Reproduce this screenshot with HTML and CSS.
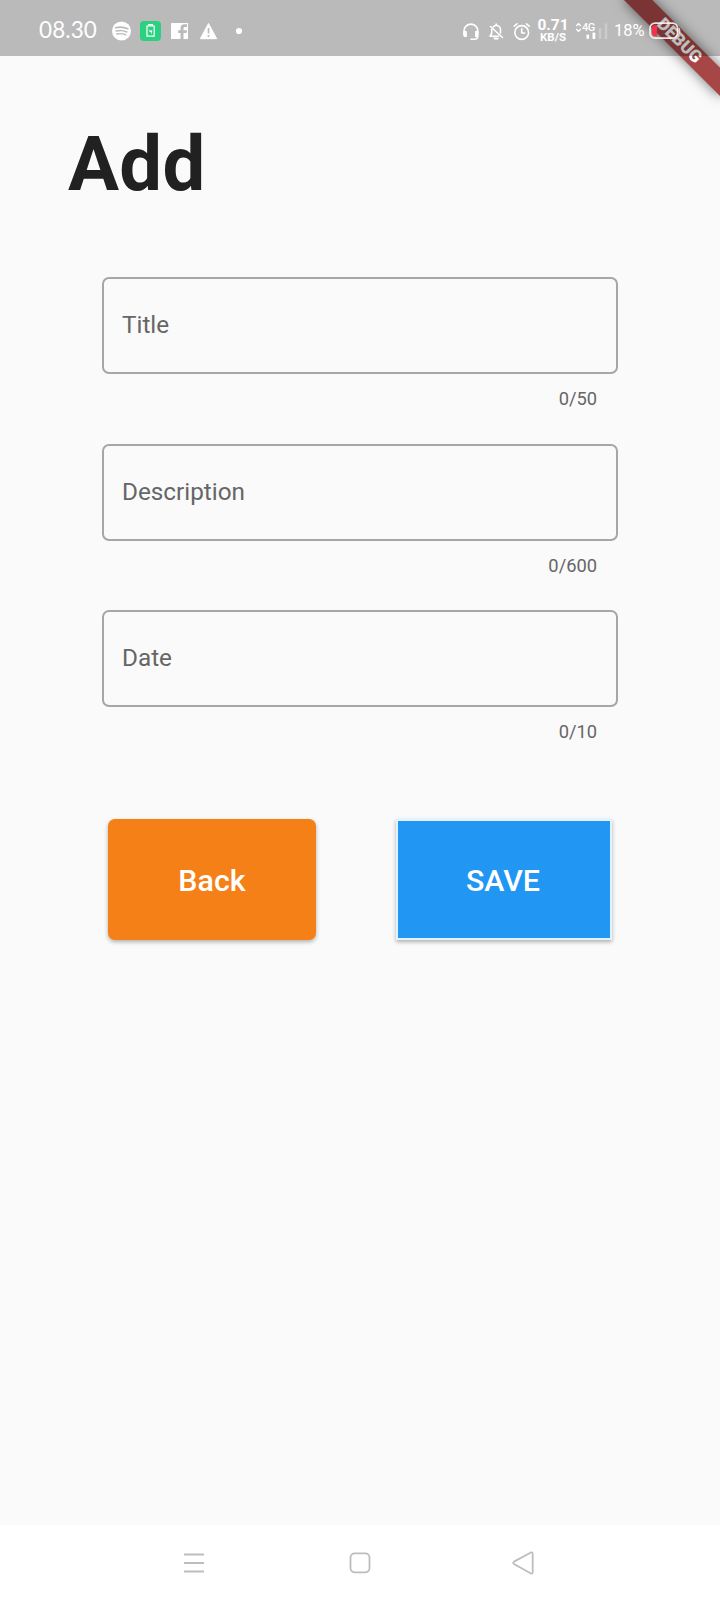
FILE: index.html
```
<!DOCTYPE html>
<html lang="en">
<head>
<meta charset="utf-8">
<title>Add</title>
<link rel="stylesheet" href="styles.css">
</head>
<body>
<div class="screen">
  <div class="banner-clip"><div class="banner">DEBUG</div></div>
  <header class="status">
    <span class="clock">08.30</span>
    <svg class="notif" width="136" height="22" viewBox="0 0 136 22">
      <circle cx="9.5" cy="11" r="9.5" fill="#fff"/>
      <g fill="none" stroke="#bbb" stroke-linecap="round">
        <path d="M3.6 7.7q6.200-1.700 12.200 1" stroke-width="1.700"/>
        <path d="M4.200 11q5.600-1.400 10.600 1" stroke-width="1.500"/>
        <path d="M4.800 14q4.800-1.200 9 .9" stroke-width="1.300"/>
      </g>
      <rect x="28" y="1" width="21" height="20" rx="4" fill="#2bd180"/>
      <path d="M36.800 5.700v-1h3.600v1M35 6h7.200v10.200H35z" fill="none" stroke="#fff" stroke-width="1.200"/>
      <path d="M36.800 9l1.500 2 .7-1 1.400 1-1.400 3.500v-2.200l-1.400-.6z" fill="#fff"/>
      <path d="M59 3h17v16h-4.500v-6h3l.5-2.800h-3.500V8.400c0-1 .5-1.500 1.500-1.500h2V4.300h-2.700c-2.500 0-3.800 1.400-3.800 3.800v2.100h-2.300V13h2.300v6H59z" fill="#fff"/>
      <path d="M96.500 3.500l8.200 15.200H88.300z" fill="#fff" stroke="#fff" stroke-linejoin="round"/>
      <path d="M96.500 8v5.500M96.500 15v2" stroke="#bbb" stroke-width="1.700"/>
      <circle cx="127" cy="11" r="3.100" fill="#fff"/>
    </svg>
    <svg class="modes" width="70" height="20" viewBox="0 0 70 20" fill="none" stroke="#fff" stroke-width="1.600" stroke-linecap="round" stroke-linejoin="round">
      <path d="M2 12V9a6.900 6.900 0 0 1 13.800 0v3M9 17.300h3.500q3.300 0 3.300-3"/>
      <path d="M1.900 9.500h2.300v5H2.800l-.9-1zM15.900 9.500h-2.300v5h1.400l.9-1z" fill="#fff" stroke-width="1.200"/>
      <path d="M31.500 4.800q1.200-1.400 2.700-1.400c2.600 0 4.300 2 4.300 4.500v3M29.700 7.500v4l-1.700 2.700h8.500M34.200 2v1.200M28.500 4.500L40.500 15.500"/>
      <path d="M32.500 16.600h3.200" stroke-width="2"/>
      <circle cx="59.700" cy="10.500" r="6.900"/>
      <path d="M59.700 6.800v4.200h3M52.200 4.200l2.800-2.400M67.200 4.200l-2.800-2.400"/>
    </svg>
    <div class="speed"><span>0.71</span><span class="unit">KB/S</span></div>
    <div class="signal">
      <svg width="34" height="20" viewBox="0 0 34 20">
        <path d="M1.200 5L3.500 2.800 5.800 5M1.200 8L3.500 10.200 5.800 8" fill="none" stroke="#fff" stroke-width="1.400"/>
        <rect x="11.500" y="13.500" width="2.600" height="4.500" rx=".8" fill="#fff"/>
        <rect x="17.500" y="11.500" width="2.800" height="6.500" rx=".8" fill="#fff"/>
        <path d="M25 7v11M31 2.500v15.500" stroke="#cbcbcb" stroke-width="2.600"/>
      </svg>
      <span class="net">4G</span>
    </div>
    <span class="percent">18%</span>
    <svg class="battery" width="34" height="20" viewBox="0 0 34 20">
      <rect x="1" y="2.200" width="27.600" height="15" rx="5" fill="none" stroke="#fff" stroke-opacity=".85" stroke-width="1.700"/>
      <path d="M30 7q1.500 2.700 0 5.500" fill="none" stroke="#fff" stroke-opacity=".8" stroke-width="1.500"/>
      <path d="M8 4.200v11H6q-3 0-3-3V7.200q0-3 3-3z" fill="#f5314a"/>
    </svg>
  </header>
  <main class="page">
    <h1 class="heading">Add</h1>
    <form class="form">
      <div class="field"><div class="box">Title</div><div class="counter">0/50</div></div>
      <div class="field"><div class="box">Description</div><div class="counter">0/600</div></div>
      <div class="field"><div class="box">Date</div><div class="counter">0/10</div></div>
    </form>
    <div class="actions">
      <button class="btn back" type="button">Back</button>
      <button class="btn save" type="button">SAVE</button>
    </div>
  </main>
  <nav class="navbar">
    <svg width="22" height="22" viewBox="0 0 22 22" fill="none" stroke="#bdbdbd" stroke-width="2"><path d="M1 2.500h20M1 11h20M1 19.500h20"/></svg>
    <svg width="22" height="22" viewBox="0 0 22 22" fill="none" stroke="#bdbdbd" stroke-width="1.800"><rect x="1.500" y="1.300" width="19" height="19" rx="4.200"/></svg>
    <svg width="22" height="24" viewBox="0 0 22 24" fill="none" stroke="#bdbdbd" stroke-width="1.800"><path d="M18.500 1.700L2 10.600q-1.600 1.200 0 2.400l16.500 9.300q2.200.8 2.200-1.300V3q0-2.100-2.200-1.300z"/></svg>
  </nav>
</div>
</body>
</html>
```
FILE: styles.css
```
body {
  margin: 0;
  font-family: Roboto, "Liberation Sans", sans-serif;
}
.screen {
  position: relative;
  display: flex;
  flex-direction: column;
  width: 720px;
  height: 1600px;
  overflow: hidden;
  background: #fafafa;
}
/* Corner ribbon, drawn beneath the translucent status bar */
.banner-clip {
  position: absolute;
  top: 0;
  right: 0;
  width: 160px;
  height: 160px;
  overflow: hidden;
}
.banner {
  position: absolute;
  left: 51px;
  top: 30.7px;
  width: 136px;
  height: 20.4px;
  transform: rotate(45deg);
  background: #a64646;
  box-shadow: 0 0 13px rgba(0, 0, 0, .55);
  color: #fff;
  font-size: 17.3px;
  font-weight: 900;
  line-height: 19.5px;
  text-align: center;
}
.status {
  position: relative;
  display: flex;
  align-items: flex-start;
  box-sizing: border-box;
  height: 56px;
  flex: none;
  padding-left: 39px;
  background: rgba(0, 0, 0, .253);
  color: #fff;
}
.clock {
  width: 73px;
  margin-top: 16px;
  font: 22.5px/28px Lato, sans-serif;
  letter-spacing: .1px;
}
.notif { margin-top: 20px; }
.modes { margin: 22px 0 0 214px; }
.speed {
  display: flex;
  flex-direction: column;
  width: 38px;
  margin: 18px 0 0 2px;
  font-size: 15.500px;
  font-weight: 700;
  line-height: 14px;
  text-align: center;
}
.unit { font-size: 11.500px; line-height: 10px; }
.signal { position: relative; height: 20px; margin: 21px 0 0 3px; }
.net {
  position: absolute;
  left: 7px;
  top: 1px;
  font-size: 11px;
  font-weight: 500;
  line-height: 11px;
  letter-spacing: -.4px;
}
.percent {
  width: 35px;
  margin: 21px 0 0 5px;
  font: 16.5px/20px Roboto, sans-serif;
}
.battery { margin-top: 21px; }
.page { flex: 1; padding: 70px 68px 0; }
.heading {
  margin: 0;
  color: #212121;
  font-size: 76px;
  font-weight: 700;
  line-height: 76px;
  letter-spacing: .3px;
}
.form {
  display: grid;
  grid-auto-rows: 166.500px;
  padding: 75px 34px 0;
}
.box {
  box-sizing: border-box;
  height: 97px;
  padding-left: 18px;
  border: 2px solid #a6a6a6;
  border-radius: 7px;
  color: #666;
  font-size: 24.3px;
  line-height: 91.500px;
}
.counter {
  padding: 14px 21px 0 0;
  color: #666;
  font-size: 18.3px;
  line-height: 22px;
  text-align: right;
}
.actions {
  display: flex;
  justify-content: space-between;
  padding: 42.500px 40px 0;
}
.btn {
  box-sizing: border-box;
  height: 121px;
  padding: 1px 0 0;
  border: 0;
  box-shadow: 0 2px 4px rgba(0, 0, 0, .3);
  color: #fff;
  font-family: Roboto, sans-serif;
  font-size: 30.4px;
  font-weight: 500;
}
.back { width: 208px; border-radius: 7px; background: #f58018; }
.save { width: 216px; padding-right: 2px; border: 2px solid #e1f3fc; background: #2196f3; }
.navbar {
  display: flex;
  align-items: center;
  justify-content: space-between;
  box-sizing: border-box;
  height: 75px;
  flex: none;
  padding: 1px 186px 0 183px;
  background: #fff;
}
.navbar svg:nth-child(2) { margin-left: 2px; }
```
